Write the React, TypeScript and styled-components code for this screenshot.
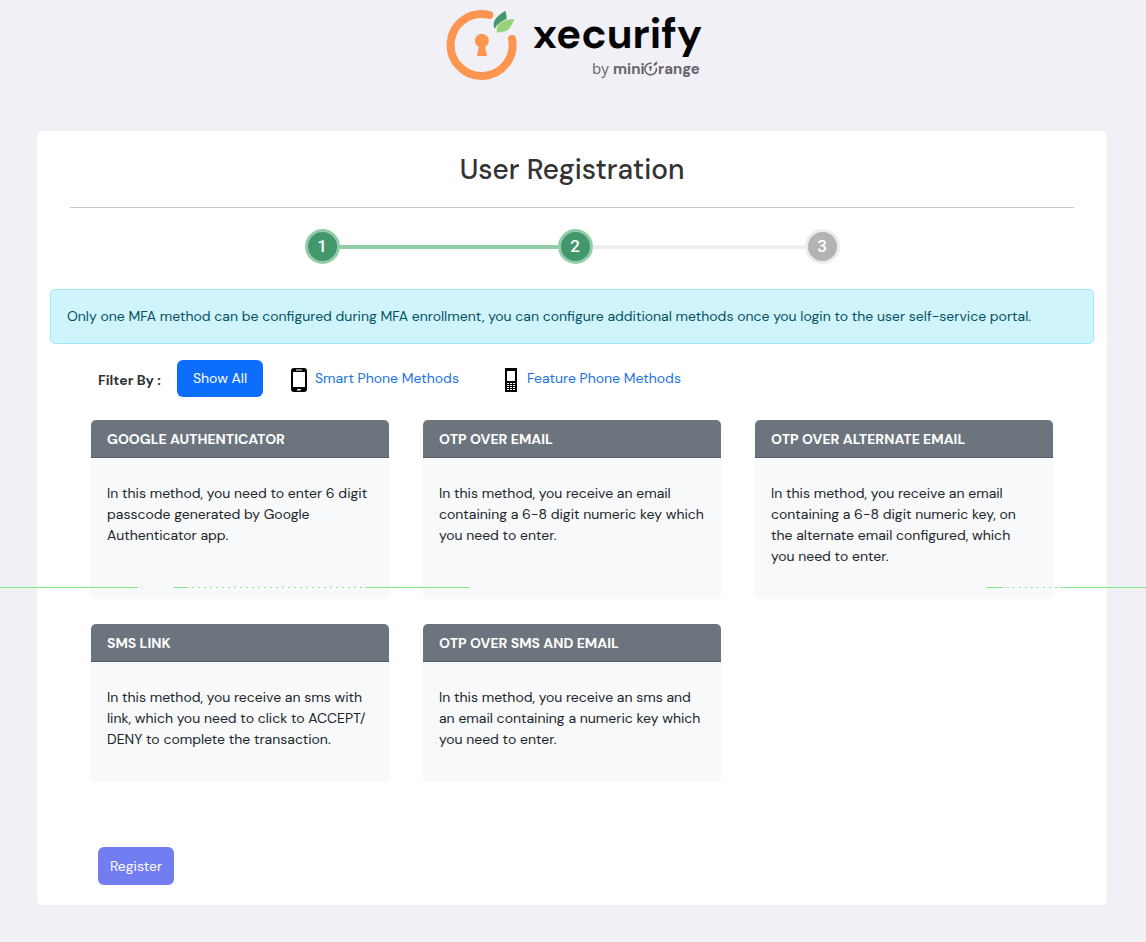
import React from "react";
import styled, { createGlobalStyle } from "styled-components";

const GlobalStyle = createGlobalStyle`
  *, *::before, *::after { box-sizing: border-box; }
  body {
    margin: 0;
    background: #f1f0f6;
    color: #212529;
    font-family: "DM Sans", Inter, sans-serif;
    font-size: 14px;
    line-height: 21px;
  }
  h1, h2, p { margin: 0; }
`;

const Page = styled.div`
  position: relative;
  min-height: 100vh;
  padding: 8px 39px 37px 37px;
`;

const LogoBar = styled.header`
  display: flex;
  justify-content: center;
  padding-left: 4px;
  margin-bottom: 45px;

  svg { display: block; overflow: visible; }
`;

const Panel = styled.main`
  display: flex;
  flex-direction: column;
  padding: 20px 13px;
  border-radius: 6px;
  background: #fff;
`;

const Title = styled.h1`
  margin: 0 20px;
  padding-bottom: 19px;
  border-bottom: 1px solid #c8c9ca;
  font-size: 28px;
  font-weight: 500;
  line-height: 37px;
  text-align: center;
  color: #333;
`;

const Stepper = styled.ol`
  display: flex;
  align-items: center;
  width: 100%;
  max-width: 535px;
  margin: 21px auto 25px;
  padding: 0;
  list-style: none;
`;

const Step = styled.li<{ $done: boolean }>`
  display: flex;
  flex: none;
  align-items: center;
  justify-content: center;
  width: 35px;
  height: 35px;
  border: 3px solid ${(p) => (p.$done ? "#93cda8" : "#ececec")};
  border-radius: 50%;
  background: ${(p) => (p.$done ? "#43976c" : "#b3b3b3")};
  color: #fff;
  font-family: Roboto, sans-serif;
  font-size: 17px;
  font-weight: 500;
`;

const StepLine = styled.li<{ $done: boolean }>`
  flex: ${(p) => (p.$done ? 218 : 212)};
  height: 4px;
  background: ${(p) => (p.$done ? "#93cda8" : "#eee")};
`;

const Notice = styled.p`
  padding: 16px;
  border: 1px solid #9eeaf9;
  border-radius: 5px;
  background: #cff4fc;
  color: #055160;
`;

const Filters = styled.div`
  display: flex;
  align-items: center;
  margin: 16px 0 23px 48px;
`;

const FilterLabel = styled.span`
  width: 79px;
  padding-top: 3px;
  font-weight: 700;
  color: #333;
`;

const PrimaryFilter = styled.button`
  width: 86px;
  height: 37px;
  margin-right: 28px;
  padding: 0;
  border: 0;
  border-radius: 6px;
  background: #0d6efd;
  color: #fff;
  font: inherit;
  cursor: pointer;
`;

const FilterButton = styled.button`
  display: flex;
  align-items: center;
  gap: 8px;
  margin-right: 44px;
  padding: 0;
  border: 0;
  background: none;
  color: #1a73e0;
  font: inherit;
  cursor: pointer;

  svg { margin-top: 3px; }
`;

const Methods = styled.div`
  display: grid;
  grid-template-columns: repeat(auto-fill, minmax(280px, 1fr));
  gap: 25px 34px;
  margin: 0 41px;
`;

const MethodCard = styled.section`
  border-radius: 5px;
  background: #f8f9fb;
  box-shadow: 0 0 2px #f8f9fb;
`;

const MethodTitle = styled.h2`
  height: 38px;
  padding: 9px 16px 7px;
  border-bottom: 1px solid #565d6b;
  border-radius: 5px 5px 0 0;
  background: #6c757d;
  color: #fff;
  font-size: 14px;
  font-weight: 700;
  line-height: 21px;
`;

const MethodText = styled.p`
  padding: 25px 16px 32px;
`;

const Register = styled.button`
  align-self: flex-start;
  width: 76px;
  height: 38px;
  margin: 65px 0 0 48px;
  padding: 0;
  border: 0;
  border-radius: 6px;
  background: #727df1;
  color: #fff;
  font: inherit;
  cursor: pointer;
`;

const Scanline = styled.div`
  position: absolute;
  top: 587px;
  left: 0;
  display: flex;
  width: 100%;
  height: 1px;
  pointer-events: none;
`;

const Segment = styled.i<{ $kind: "green" | "white" | "dots"; $width?: number }>`
  flex: ${(p) => (p.$width ? `0 0 ${p.$width}px` : "1")};
  background: ${(p) =>
    p.$kind === "green"
      ? "#80ec80"
      : p.$kind === "white"
        ? "#fff"
        : "repeating-linear-gradient(90deg, #fff 0 4px, #80ec80 4px 6px, #fff 6px 9px, #e9f59a 9px 10px, #8ce6c8 10px 12px)"};
`;

const Logo = () => (
  <svg width="256" height="78" viewBox="446 8 256 78" role="img" aria-label="xecurify by miniOrange">
    <path d="M489.3 15A31 31 0 1 0 512 39" fill="none" stroke="#fb954f" strokeWidth="8" strokeLinecap="round" />
    <path d="M478.8 47A7 7 0 1 1 485 47L487 56H477Z" fill="#fb954f" />
    <path d="M494.5 29C491.5 21 497 16 505.3 10.8C506 14 507 16 506.5 19C501 21 497 24 494.5 29Z" fill="#43976c" />
    <path d="M497 32.5C495 24 502 19 514.8 19.2C511 23 512 33 497 32.5Z" fill="#98d27a" />
    <text x="533" y="48" fontFamily="DM Sans, Inter, sans-serif" fontSize="42" fontWeight="700" fill="#050505">xecurify</text>
    <g fill="#666669">
      <text x="592" y="74" fontFamily="Open Sans, sans-serif" fontSize="15">by</text>
      <text x="613" y="74" fontFamily="DM Sans, Lato, sans-serif" fontSize="15" fontWeight="700">mini</text>
      <text x="658" y="74" fontFamily="DM Sans, Lato, sans-serif" fontSize="15" fontWeight="700">range</text>
      <path d="M651.5 63.3A5.8 5.8 0 1 0 656.3 67.8" fill="none" stroke="#666669" strokeWidth="1.6" />
      <path d="M653.5 66Q653 62.5 657.5 61.5Q657.5 65.5 653.5 66Z" />
      <path d="M650.5 71V67.5" stroke="#666669" strokeWidth="1.4" />
      <circle cx="650.5" cy="67.5" r="1.4" />
    </g>
  </svg>
);

const SmartPhone = () => (
  <svg width="16" height="24" viewBox="0 0 16 24" aria-hidden="true">
    <rect width="16" height="24" rx="3" fill="#000" />
    <rect x="2" y="4" width="12" height="15" fill="#fff" />
    <rect x="5" y="1.5" width="6" height="1" fill="#fff" />
    <rect x="6" y="21" width="4" height="1.5" rx=".7" fill="#fff" />
  </svg>
);

const FeaturePhone = () => (
  <svg width="16" height="24" viewBox="-2 0 16 24" aria-hidden="true">
    <rect width="12" height="24" fill="#000" />
    <rect x="2" y="3" width="8" height="10" fill="#fff" />
    {[15, 17, 19, 21].map((y) =>
      [2, 5, 8].map((x) => <rect key={`${x}-${y}`} x={x} y={y} width="2" height="1" fill="#fff" />)
    )}
  </svg>
);

const methods = [
  { title: "GOOGLE AUTHENTICATOR", text: "In this method, you need to enter 6 digit passcode generated by Google Authenticator app." },
  { title: "OTP OVER EMAIL", text: "In this method, you receive an email containing a 6-8 digit numeric key which you need to enter." },
  { title: "OTP OVER ALTERNATE EMAIL", text: "In this method, you receive an email containing a 6-8 digit numeric key, on the alternate email configured, which you need to enter." },
  { title: "SMS LINK", text: "In this method, you receive an sms with link, which you need to click to ACCEPT/\u200BDENY to complete the transaction." },
  { title: "OTP OVER SMS AND EMAIL", text: "In this method, you receive an sms and an email containing a numeric key which you need to enter." },
];

export default function App() {
  return (
    <>
      <GlobalStyle />
      <Page>
        <LogoBar>
          <Logo />
        </LogoBar>
        <Panel>
          <Title>User Registration</Title>
          <Stepper>
            <Step $done>1</Step>
            <StepLine $done aria-hidden="true" />
            <Step $done>2</Step>
            <StepLine $done={false} aria-hidden="true" />
            <Step $done={false}>3</Step>
          </Stepper>
          <Notice>
            Only one MFA method can be configured during MFA enrollment, you can configure additional methods once you
            login to the user self-service portal.
          </Notice>
          <Filters>
            <FilterLabel>Filter By :</FilterLabel>
            <PrimaryFilter type="button">Show All</PrimaryFilter>
            <FilterButton type="button">
              <SmartPhone />
              Smart Phone Methods
            </FilterButton>
            <FilterButton type="button">
              <FeaturePhone />
              Feature Phone Methods
            </FilterButton>
          </Filters>
          <Methods>
            {methods.map((m) => (
              <MethodCard key={m.title}>
                <MethodTitle>{m.title}</MethodTitle>
                <MethodText>{m.text}</MethodText>
              </MethodCard>
            ))}
          </Methods>
          <Register type="button">Register</Register>
        </Panel>
        <Scanline aria-hidden="true">
          <Segment $kind="green" $width={138} />
          <Segment $kind="white" $width={35} />
          <Segment $kind="green" $width={15} />
          <Segment $kind="dots" $width={177} />
          <Segment $kind="green" $width={105} />
          <Segment $kind="white" />
          <Segment $kind="green" $width={17} />
          <Segment $kind="dots" $width={60} />
          <Segment $kind="green" $width={83} />
        </Scanline>
      </Page>
    </>
  );
}
